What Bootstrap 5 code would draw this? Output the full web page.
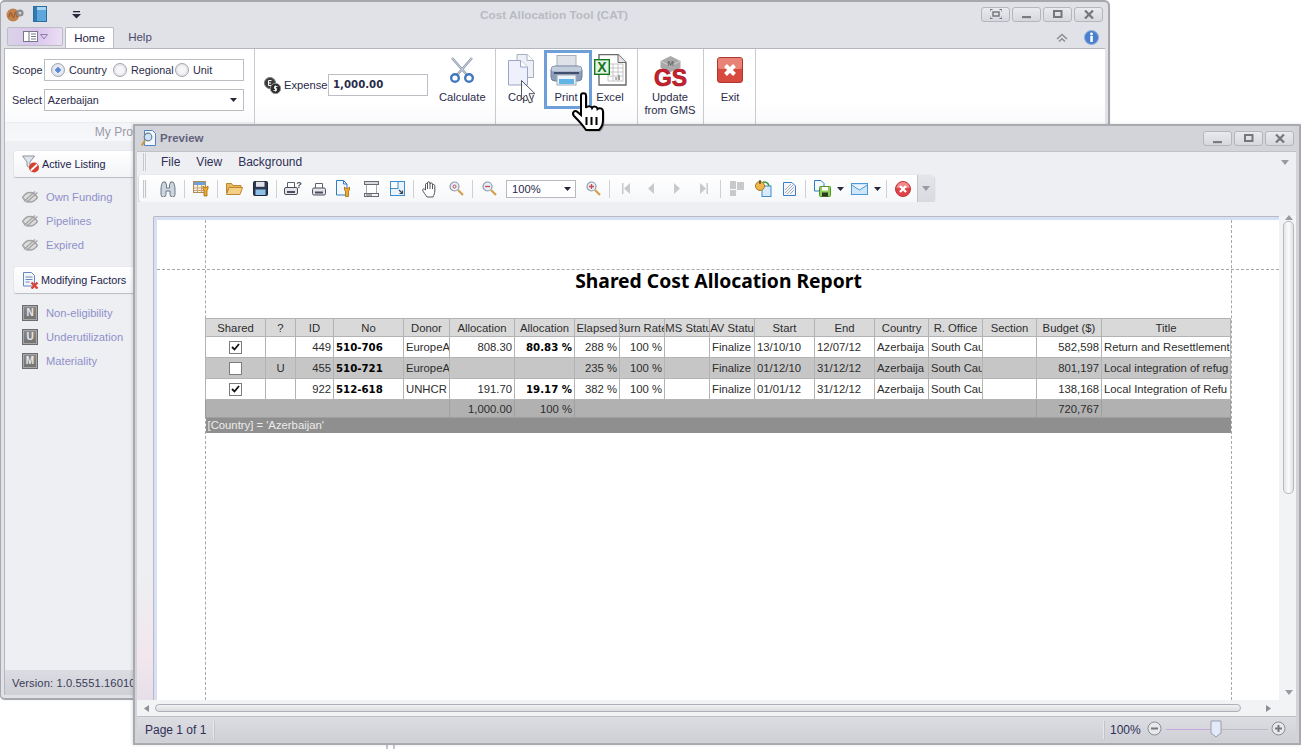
<!DOCTYPE html>
<html lang="en">
<head>
<meta charset="utf-8">
<title>Cost Allocation Tool</title>
<link href="https://cdn.jsdelivr.net/npm/bootstrap@5.3.0/dist/css/bootstrap.min.css" rel="stylesheet">
<style>
html,body{height:100%;margin:0;background:#fff;overflow:hidden;font-family:"Liberation Sans","DejaVu Sans",sans-serif;font-size:11.2px;color:#2b2b4a}
svg{display:block;flex:none}
.desk{position:relative;width:1301px;height:749px;overflow:hidden}
.win-main{position:absolute;left:0;top:0;width:1110px;height:700px;background:#e0e2e7;border:1px solid #a7a8ae;border-width:2px 2px 2px 1px;border-radius:5px 6px 5px 5px;display:flex;flex-direction:column;box-shadow:0 0 1px #bbb}
.win-prev{position:absolute;left:133px;top:124px;width:1168px;height:621px;background:#d3d4d9;border:2px solid #a9aab0;display:flex;flex-direction:column;box-shadow:-1px 0 3px rgba(0,0,0,.12)}
.tbar-main{height:24px;padding:0 5px}
.app-title{position:absolute;left:-2px;width:1110px;top:5px;text-align:center;font-weight:700;font-size:11.8px;color:#b9bac2;pointer-events:none}
.wbtn{width:29px;height:15px;padding:0;border:1px solid #b4b6bc;border-radius:3px;background:linear-gradient(#e9eaee,#d6d8dd);display:flex;align-items:center;justify-content:center;margin-left:2px}
.tabs-row{height:22px;padding-left:6px;border:0;position:relative}
.appbtn{width:56px;height:19px;border:1px solid #bcbcc6;border-radius:2px;background:linear-gradient(100deg,#dcd4e8,#d9c4ee 50%,#ece0f4);margin-top:1px;padding:0;display:flex;align-items:center;justify-content:center;gap:2px}
.tabs-row .nav-link{height:22px;padding:0 13px;font-size:11.5px;line-height:20px;color:#4b4b6e;border:0;border-radius:0;margin-left:2px}
.tabs-row .nav-link.active{width:49px;padding:0;text-align:center;background:#fff;color:#23234a;border:1px solid #b9bbc2;border-bottom:0;border-radius:2px 2px 0 0;margin-top:1px;height:21px}
.tabs-row .nav-link.plain{margin-left:0;width:52px;padding:0;text-align:center;margin-top:1px}
.tab-tools{position:absolute;right:9px;top:4px;gap:16px}
.ribbon{height:93px;margin:0 3px 0 3px;background:linear-gradient(#fff 0,#fff 55%,#f4f5f8);border-top:1px solid #b4b6bd;border-left:1px solid #b4b6bd;display:flex}
.rgroup{border-right:1px solid #c9cad0;position:relative;flex:none}
.rg-scope{width:250px;padding:10px 0 0 7px;font-size:10.8px}
.rg-exp{width:241px}
.rg-clip{width:142px}
.rg-gms{width:66px}
.rg-exit{width:52px}
.rg-cap{position:absolute;left:0;right:0;bottom:0;height:19px;text-align:center;color:#9a9aa8;font-size:12px;line-height:19px;padding-right:16px;background:linear-gradient(#f3f4f7,#f7f8fa);border-top:1px solid #eceDF0}
.rlabel{width:32px;color:#2b2b4a}
.fieldbox{height:22px;width:200px;border:1px solid #bcbec4;background:#fff;display:flex;align-items:center}
.radio-o{width:14px;height:14px;border-radius:50%;border:1px solid #a2a4ac;background:radial-gradient(#f6f6f8 35%,#d6d7dc);display:inline-block;flex:none;margin-right:4px}
.radio-o.on{background:radial-gradient(#4f7fd4 0,#6e96dc 30%,#e9edf6 34%,#d6dae4)}
.ricon{position:absolute}
.rbtn{position:absolute;top:0;height:80px;display:flex;flex-direction:column;align-items:center;padding:0;border:0;background:none;font-size:11.2px;line-height:13px;color:#2b2b4a;text-align:center}
.rbtn .rtxt{position:absolute;top:42px;left:0;right:0}
.sel-print{position:absolute;left:48px;top:1px;width:48px;height:59px;border:3px solid #6f9fd8}
.amt{width:100px;height:22px;border:1px solid #bcbec4;background:#fff;font-family:"DejaVu Sans",sans-serif;font-weight:700;padding-left:4px;line-height:20px;font-size:10.2px;color:#2b2b4a}
.body-main{flex:1;min-height:0;margin:0 3px 0 3px;background:#eeeff2;border-left:1px solid #b4b6bd;position:relative;padding:10px 0 0 9px}
.sbtn{width:125px;height:26px;background:linear-gradient(#fff,#f3f4f7);border:0;border-radius:2px 0 0 2px;box-shadow:0 1px 1px #bcbdc4,-0 0 1px #c2c3c9;padding:0 0 0 8px;color:#22224a;font-size:10.8px;gap:2px}
.nav-items{padding:8px 0 10px 8px;margin:0;background:none;border:0}
.nav-items .list-group-item{background:none;border:0;padding:0;height:24px;display:flex;align-items:center;gap:8px;color:#8f8fca;font-size:11.2px}
.lettr{width:16px;height:16px;border:1px solid #6c6c6c;background:linear-gradient(#8a8a8a,#727272);color:#e8e8e8;font-weight:700;font-size:10px;line-height:14px;text-align:center;box-shadow:inset 0 0 0 1px #a8a8a8}
.st-main{height:25px;margin:0 3px 3px 3px;background:linear-gradient(#dcdde2,#cfd0d6);border-left:1px solid #b4b6bd;padding-left:7px;line-height:26px;color:#3a3a5a;letter-spacing:.1px;overflow:hidden}
.ptitle{height:25px;padding:0 5px 0 6px;flex:none}
.ptitle b{color:#62627c;font-size:11.5px;margin-left:3px}
.pwrap{flex:1;min-height:0;background:#eeeff2;display:flex;flex-direction:column;position:relative;border-top:1px solid #c1c2c8;margin:0 3px 1px 2px}
.pmenu{height:20px;margin-bottom:3px;padding:0 0 0 6px;min-height:0;flex:none;flex-wrap:nowrap;justify-content:flex-start;position:relative}
.pmenu .grip{margin-right:14px}
.pmenu .nav-link{padding:0 9px 0 0;font-size:12px;color:#2f2f58;margin-right:7px}
.grip{width:4px;height:18px;background:repeating-linear-gradient(90deg,#c6c7cc 0 1px,#f4f4f6 1px 2px);margin-right:8px;flex:none}
.ptool{height:27px;margin-left:2px;width:795px;flex:none;background:linear-gradient(#fff,#f6f7f9);border-radius:3px;box-shadow:0 1px 2px #a2a3ab;padding-left:4px;position:relative;display:flex;align-items:center}
.tb{width:26px;height:24px;display:flex;align-items:center;justify-content:center;flex:none}
.tb.w25{width:25px}.tb.w28{width:27px}.tb.w29{width:28px}
.tarrow{width:11px;flex:none}
.tsep{width:7px;height:18px;flex:none;position:relative}
.tsep:after{content:"";position:absolute;left:3px;top:0;width:1px;height:18px;background:#cfd0d6}
.zoomsel{width:70px;height:18px;border:1px solid #b8b9c0;background:#fff;margin:0 4px;padding-left:5px;line-height:16px;color:#2b2b4a;position:relative;flex:none}
.zoomsel svg{position:absolute;right:4px;top:6px}
.toverflow{position:absolute;right:0;top:0;bottom:0;width:17px;background:linear-gradient(#e4e5ea,#d9dae0);border-left:1px solid #c4c5cb;border-radius:0 3px 3px 0;display:flex;align-items:center;justify-content:center}
.pview{flex:1;min-height:0;display:flex;position:relative;padding:14px 0 0 16px;background:linear-gradient(180deg,#eeeff2 75%,#f1e6ec 92%,#e6dfe9)}
.pframe{flex:1;min-width:0;border-top:1px solid #b8bac0;border-left:1px solid #b8bac0;border-radius:2px 0 0 0;background:#d7e0f6;padding:3px 0 0 3px;display:flex}
.ppage{flex:1;background:#fff;position:relative;min-width:0}
.dash-h{position:absolute;left:0;right:0;top:49px;border-top:1px dashed #a8a8a8}
.pinner{position:absolute;left:48px;top:0;bottom:0;width:1027px;border-left:1px dashed #a8a8a8;border-right:1px dashed #a8a8a8}
.rtitle{padding-top:49px;height:98px;text-align:center;font-family:"Noto Sans",sans-serif;font-weight:700;font-size:19.3px;line-height:24px;color:#000}
.rep{table-layout:fixed;width:1026px;margin:0 0 0 -1px;border-collapse:collapse;font-size:11.3px;color:#2d2d2d}
.rep th,.rep td{border:1px solid #b3b3b3;padding:0 2px;white-space:nowrap;overflow:hidden;font-weight:400;background:#fff;color:#2d2d2d;height:21px;line-height:19px;box-shadow:none;vertical-align:middle}
.rep thead th{height:18px;line-height:16px;background:#d9d9d9;text-align:center;padding:0}
.rep .alt td{background:#c6c6c6}
.rep .tot td{background:#b1b1b1;height:18px;line-height:16px;border-color:#a0a0a0;border-left-color:#999}
.rep .foot td{background:#8f8f8f;color:#ececec;height:15px;line-height:14px;border:0}
.clipc{display:flex;justify-content:center;overflow:hidden;white-space:nowrap}
.cb{width:13px;height:13px;margin:0 auto;border:1px solid #7c7c7c;background:#fff;display:flex;align-items:center;justify-content:center}
.rep td.no{font-family:"DejaVu Sans",sans-serif;font-weight:700;color:#000;font-size:10.2px}
.vsb{width:17px;flex:none;background:#f2f3f5;position:relative}
.vth{position:absolute;left:4px;top:5px;width:11px;height:273px;border:1px solid #b9bac0;border-radius:5px;background:linear-gradient(90deg,#e5e6ea,#fbfbfc 50%,#e1e2e6);}
.hsb{height:16px;flex:none;background:#f2f3f5;position:relative}
.hth{position:absolute;left:18px;right:55px;top:4px;height:8px;border:1px solid #aeb0b7;border-radius:4px;background:linear-gradient(#f2f2f4,#dcdde1)}
.arr{position:absolute}
.pstat{height:26px;flex:none;background:linear-gradient(#dcdde2,#cfd0d6);position:relative;padding-left:8px;color:#2f2f58;font-size:12px;border-top:1px solid #bfc0c6}
.ssep{width:2px;height:18px;background:#e8e8ec;border-right:1px solid #c4c5cb}
.zoomtrack{position:absolute;left:1029px;top:12px;width:102px;height:1px;background:linear-gradient(90deg,#c8a9dc 0,#c8a9dc 48%,#bcbdc4 50%)}
.hand{position:absolute;left:570px;top:91px;z-index:5}
.arrowc{position:absolute;left:520px;top:79px;z-index:5}
.dots{position:absolute;left:386px;top:745px;width:9px;height:4px;border-left:2px solid #c8c8cc;border-right:2px solid #c8c8cc}
</style>
</head>
<body>
<div class="desk">

<!-- main window -->
<div class="win-main">
  <div class="app-title">Cost Allocation Tool (CAT)</div>
  <div class="tbar-main d-flex align-items-center">
    <svg width="18" height="16" viewBox="0 0 18 16"><circle cx="7" cy="9" r="6.5" fill="#c2824e"/><path d="M3 11c1-5 2-6 3-2s2 3 3-1 2-2 2 3" fill="none" stroke="#8c4f28" stroke-width="1"/><circle cx="14" cy="7" r="3.6" fill="#8d8d90"/><circle cx="14" cy="7" r="1.3" fill="#d9dade"/></svg>
    <svg style="margin-left:9px" width="14" height="16" viewBox="0 0 14 16"><rect x=".5" y=".5" width="13" height="15" fill="#5ea7dc" stroke="#2c6d9e"/><rect x="1" y="1" width="3" height="14" fill="#2f7bb2"/><rect x="4" y="1" width="9" height="3" fill="#a8d4f0"/></svg>
    <svg style="margin-left:25px" width="9" height="9" viewBox="0 0 9 9"><rect x="1" y="1" width="7" height="1.3" fill="#26263c"/><path d="M0 4h9L4.500 8.500z" fill="#26263c"/></svg>
    <div class="ms-auto d-flex">
      <button class="btn wbtn" aria-label="Fullscreen"><svg width="12" height="10" viewBox="0 0 12 10" fill="none" stroke="#6e7078"><path d="M0 2.500V.5h2.500M9.500.5H12v2M0 7.500v2h2.500M9.500 9.500H12v-2"/><rect x="3" y="3" width="6" height="4" stroke-width="1.400"/></svg></button>
      <button class="btn wbtn" aria-label="Minimize"><svg width="10" height="10" viewBox="0 0 10 10"><rect x="0" y="7" width="9" height="2.200" fill="#7a7c84"/></svg></button>
      <button class="btn wbtn" aria-label="Maximize"><svg width="10" height="9" viewBox="0 0 10 9" fill="none" stroke="#74767e" stroke-width="2"><rect x="1" y="1" width="7.500" height="6"/></svg></button>
      <button class="btn wbtn" aria-label="Close"><svg width="10" height="9" viewBox="0 0 10 9" stroke="#74767e" stroke-width="2.200"><path d="M1 .5l8 8M9 .5l-8 8"/></svg></button>
    </div>
  </div>
  <ul class="nav tabs-row">
    <li class="nav-item"><button class="btn appbtn" aria-label="Menu"><svg width="15" height="11" viewBox="0 0 15 11"><rect x=".5" y=".5" width="14" height="10" fill="#fff" stroke="#77778a"/><path d="M6 .5v10M8 3h5M8 5.500h5M8 8h5" stroke="#77778a" fill="none"/></svg><svg width="8" height="6" viewBox="0 0 8 6"><path d="M.5.500h7L4 5z" fill="none" stroke="#8d7fa8"/></svg></button></li>
    <li class="nav-item"><a class="nav-link active" href="#">Home</a></li>
    <li class="nav-item"><a class="nav-link plain" href="#">Help</a></li>
    <li class="tab-tools d-flex align-items-center">
      <svg width="12" height="10" viewBox="0 0 12 10" fill="none" stroke="#8b8c92" stroke-width="1.500"><path d="M1 6l5-4.500L11 6M3 8.500l3-2.700 3 2.700"/></svg>
      <svg width="15" height="15" viewBox="0 0 15 15"><circle cx="7.500" cy="7.500" r="7" fill="#4a7fcb" stroke="#8fb0de"/><circle cx="7.500" cy="4" r="1.400" fill="#fff"/><rect x="6.300" y="6" width="2.500" height="6" fill="#fff"/></svg>
    </li>
  </ul>
  <div class="ribbon">
    <div class="rgroup rg-scope">
      <div class="d-flex align-items-center"><span class="rlabel">Scope</span>
        <div class="fieldbox" style="padding-left:6px"><span class="radio-o on"></span><span style="width:44px">Country</span><span class="radio-o"></span><span style="width:44px">Regional</span><span class="radio-o"></span><span>Unit</span></div></div>
      <div class="d-flex align-items-center" style="margin-top:8px"><span class="rlabel">Select</span>
        <div class="fieldbox ps-1 position-relative">Azerbaijan<svg class="ms-auto me-2" width="7" height="4" viewBox="0 0 7 4"><path d="M0 0h7L3.500 4z" fill="#26263c"/></svg></div></div>
      <div class="rg-cap">My Profile</div>
    </div>
    <div class="rgroup rg-exp">
      <div class="d-flex align-items-center ricon" style="left:9px;top:25px">
        <svg width="17" height="17" viewBox="0 0 17 17"><circle cx="6" cy="6" r="5.500" fill="#3c3c3e" stroke="#777"/><path d="M7.500 3.500H4.500v5h3M4.500 6h2.500" stroke="#fff" fill="none"/><circle cx="11.500" cy="11.500" r="5.200" fill="#2e2e30" stroke="#999"/><path d="M13.500 9.500h-3v2h2v2h-3M11.500 8.500v6" stroke="#fff" fill="none" stroke-width=".9"/></svg>
        <span style="margin-left:3px;width:44px">Expense</span>
        <div class="amt">1,000.00</div>
      </div>
      <button class="rbtn" style="left:184px;width:46px"><svg style="margin-top:8px" width="26" height="26" viewBox="0 0 26 26" fill="none"><path d="M3 1l15 17M23 1L8 18" stroke="#8d99ab" stroke-width="2.400"/><path d="M3 1l15 17M23 1L8 18" stroke="#dfe5ee" stroke-width=".8"/><circle cx="6" cy="21" r="3.800" stroke="#3f78bd" stroke-width="2.400"/><circle cx="20" cy="21" r="3.800" stroke="#3f78bd" stroke-width="2.400"/></svg><span class="rtxt">Calculate</span></button>
    </div>
    <div class="rgroup rg-clip">
      <div class="sel-print"></div>
      <button class="rbtn" style="left:0;width:50px"><svg style="margin-top:5px" width="26" height="32" viewBox="0 0 26 32"><path d="M9 .5h10l6.500 6v17H9z" fill="#eef0f6" stroke="#a6aec4"/><path d="M19 .5v6h6.500" fill="#fff" stroke="#a6aec4"/><path d="M.5 6.500h12l7 6.500v18H.5z" fill="#eef1fb" stroke="#9aa5c8"/><path d="M12.500 6.500v6.500h7" fill="#fff" stroke="#9aa5c8"/></svg><span class="rtxt">Copy</span></button>
      <button class="rbtn" style="left:45px;width:50px"><svg style="margin-top:6px" width="33" height="31" viewBox="0 0 33 31"><rect x="7" y=".5" width="19" height="13" fill="#dfe2e8" stroke="#a9aeb9"/><rect x="1" y="11" width="31" height="15" rx="4" fill="#8c9db8" stroke="#6f7f9b"/><rect x="1.500" y="11.500" width="30" height="5" rx="2.500" fill="#c3cedd"/><rect x="4" y="17" width="25" height="2" fill="#3f4e6c"/><rect x="7" y="20" width="19" height="10" fill="#eef3fa" stroke="#9ea9b8"/><rect x="9" y="24" width="15" height="5" fill="#62b4e4"/></svg><span class="rtxt">Print</span></button>
      <button class="rbtn" style="left:89px;width:50px"><svg style="margin-top:5px" width="33" height="32" viewBox="0 0 33 32"><path d="M5 .5h19l8 8v22.500H5z" fill="#fff" stroke="#6a6a6a" stroke-width="1.400"/><path d="M24 .5v8h8" fill="#e5e5e5" stroke="#6a6a6a"/><path d="M14 10h15v17H14zM14 14h15M14 18h15M14 22h15M19 10v17M24 10v17" fill="none" stroke="#c5c5c5"/><rect x="24" y="21" width="2" height="5" fill="#a0a0a0"/><rect x="21" y="23" width="2" height="3" fill="#b5b5b5"/><rect x=".7" y="5.700" width="14.600" height="14.600" fill="#e5f3e4" stroke="#137a1c" stroke-width="1.400"/><text x="8" y="17.500" text-anchor="middle" font-family="Liberation Sans" font-weight="700" font-size="14" fill="#13741d">X</text></svg><span class="rtxt">Excel</span></button>
    </div>
    <div class="rgroup rg-gms">
      <button class="rbtn" style="left:2px;width:60px"><svg style="margin-top:7px" width="33" height="32" viewBox="0 0 33 32"><path d="M16.500 0l10 5v7l-10 4-10-4V5z" fill="#a9a9a9"/><path d="M6.500 5l10 5 10-5" fill="none" stroke="#cfcfcf"/><text x="16.500" y="10" text-anchor="middle" font-family="Liberation Sans" font-weight="700" font-size="8" fill="#6d6d6d">M</text><text x="16.500" y="30" text-anchor="middle" textLength="33" lengthAdjust="spacingAndGlyphs" font-family="Liberation Sans" font-weight="700" font-size="23" fill="#c8202e" stroke="#a01622" stroke-width=".7">GS</text></svg><span class="rtxt">Update<br>from GMS</span></button>
    </div>
    <div class="rgroup rg-exit">
      <button class="rbtn" style="left:1px;width:50px"><svg style="margin-top:8px" width="26" height="26" viewBox="0 0 26 26"><rect x=".5" y=".5" width="25" height="25" rx="2.500" fill="#d74a40" stroke="#b0362e"/><rect x="1" y="1" width="24" height="11" rx="2" fill="#e98377"/><path d="M8.500 8.500l9 9M17.500 8.500l-9 9" stroke="#fff" stroke-width="4"/></svg><span class="rtxt">Exit</span></button>
    </div>
  </div>
  <div class="body-main">
    <button class="btn sbtn d-flex align-items-center"><svg width="18" height="18" viewBox="0 0 18 18"><path d="M.5 1h12l-4.500 6v6l-3-2V7z" fill="#dfe4ea" stroke="#8b95a3"/><circle cx="12" cy="12.500" r="5" fill="#d7402e"/><path d="M8.800 15.500l6.400-6" stroke="#fff" stroke-width="1.800"/></svg><span>Active Listing</span></button>
    <ul class="list-group nav-items">
      <li class="list-group-item"><svg width="16" height="12" viewBox="0 0 16 12" fill="#dcdcdc" stroke="#a3a3a3" stroke-width="1.300"><path d="M.5 6.500C3 2.500 5.500 1.500 8 1.500s5 1 7.500 5C13 10 10.500 11 8 11s-5-1-7.500-4.500z"/><path d="M2 10.500l11-10M4.500 11.500l11-10" stroke-width="1.200"/></svg>Own Funding</li>
      <li class="list-group-item"><svg width="16" height="12" viewBox="0 0 16 12" fill="#dcdcdc" stroke="#a3a3a3" stroke-width="1.300"><path d="M.5 6.500C3 2.500 5.500 1.500 8 1.500s5 1 7.500 5C13 10 10.500 11 8 11s-5-1-7.500-4.500z"/><path d="M2 10.500l11-10M4.500 11.500l11-10" stroke-width="1.200"/></svg>Pipelines</li>
      <li class="list-group-item"><svg width="16" height="12" viewBox="0 0 16 12" fill="#dcdcdc" stroke="#a3a3a3" stroke-width="1.300"><path d="M.5 6.500C3 2.500 5.500 1.500 8 1.500s5 1 7.500 5C13 10 10.500 11 8 11s-5-1-7.500-4.500z"/><path d="M2 10.500l11-10M4.500 11.500l11-10" stroke-width="1.200"/></svg>Expired</li>
    </ul>
    <button class="btn sbtn d-flex align-items-center"><svg style="margin-left:1px" width="16" height="17" viewBox="0 0 16 17"><path d="M.5.500h8l3 3V14H.5z" fill="#f2f5fb" stroke="#6b87b8"/><path d="M2.500 5h7M2.500 7.500h7M2.500 10h4" stroke="#6b87b8"/><path d="M8.500 10.500l6 6M14.500 10.500l-6 6" stroke="#d8433a" stroke-width="2.400"/></svg><span>Modifying Factors</span></button>
    <ul class="list-group nav-items">
      <li class="list-group-item"><span class="lettr">N</span>Non-eligibility</li>
      <li class="list-group-item"><span class="lettr">U</span>Underutilization</li>
      <li class="list-group-item"><span class="lettr">M</span>Materiality</li>
    </ul>
  </div>
  <div class="st-main">Version: 1.0.5551.16010</div>
</div>

<!-- pointers over the ribbon -->
<svg class="arrowc" width="16" height="26" viewBox="0 0 16 26"><path d="M1.500 1.500v19l4.500-4.500 3.500 8 3-1.300-3.500-8h6z" fill="#fff" fill-opacity=".7" stroke="#55555f"/></svg>
<svg class="hand" width="38" height="42" viewBox="0 0 38 42"><path d="M11 4.500c0-3 5-3 5 0V17c1-2.500 5-2.500 6 0 1-2 5-2 5.500 1 1.500-1.500 5.500-1 5.500 2.500V29c0 5-2 8-4 10H16c-2-3-6-8-12-14-2.500-3 .5-6.500 3.500-4l3.500 3z" fill="#000" opacity=".3" transform="translate(1.500 1.500)"/><path d="M11 4.500c0-3 5-3 5 0V17c1-2.500 5-2.500 6 0 1-2 5-2 5.500 1 1.500-1.500 5.500-1 5.500 2.500V29c0 5-2 8-4 10H16c-2-3-6-8-12-14-2.500-3 .5-6.500 3.500-4l3.500 3z" fill="#fff" stroke="#000" stroke-width="2"/><path d="M16.500 26v8M21.500 26v8M26.500 26v8" stroke="#000" stroke-width="2"/></svg>

<!-- preview window -->
<div class="win-prev" style="z-index:2">
  <div class="ptitle d-flex align-items-center">
    <svg width="16" height="17" viewBox="0 0 16 17"><path d="M3.500.5h8l3 3v12h-11z" fill="#f3f7fd" stroke="#4f83c4"/><circle cx="7" cy="7" r="3.800" fill="#cfe5f7" stroke="#6d7f94" stroke-width="1.200"/><path d="M4 10.500L.8 15.500" stroke="#c99a45" stroke-width="2.200"/></svg>
    <b>Preview</b>
    <div class="ms-auto d-flex">
      <button class="btn wbtn" aria-label="Minimize"><svg width="10" height="10" viewBox="0 0 10 10"><rect x="0" y="7" width="9" height="2.200" fill="#7a7c84"/></svg></button>
      <button class="btn wbtn" aria-label="Maximize"><svg width="10" height="9" viewBox="0 0 10 9" fill="none" stroke="#74767e" stroke-width="2"><rect x="1" y="1" width="7.500" height="6"/></svg></button>
      <button class="btn wbtn" aria-label="Close"><svg width="10" height="9" viewBox="0 0 10 9" stroke="#74767e" stroke-width="2.200"><path d="M1 .5l8 8M9 .5l-8 8"/></svg></button>
    </div>
  </div>
  <div class="pwrap">
    <nav class="navbar pmenu align-items-center">
      <span class="grip"></span>
      <a class="nav-link" href="#">File</a><a class="nav-link" href="#">View</a><a class="nav-link" href="#">Background</a>
      <svg class="ms-auto" style="margin-right:7px" width="8" height="5" viewBox="0 0 8 5"><path d="M0 0h8L4 5z" fill="#9a9ba2"/></svg>
    </nav>
    <div class="ptool">
      <span class="grip"></span>
      <span class="tb" title="Find"><svg width="16" height="16" viewBox="0 0 16 16"><path d="M1 8c0-3 1-6 2-7h2.500l1 3v3H9.500V4l1-3H13c1 1 2 4 2 7v5.500A2.500 2.500 0 0110 13.500V10H6v3.500a2.500 2.500 0 01-5 0z" fill="#cbd6e3" stroke="#71777f"/></svg></span>
      <span class="tsep"></span>
      <span class="tb"><svg width="17" height="16" viewBox="0 0 17 16"><rect x=".5" y=".5" width="12" height="11" fill="#f8efdd" stroke="#b08a5a"/><rect x="1" y="1" width="11" height="3" fill="#6aa1d9"/><path d="M1 7h11M1 9.500h11M4.500 4v7M8.500 4v7" stroke="#c6a57a"/><path d="M10 5a3 3 0 005 0v3l-1 1v6h-3V9l-1-1z" fill="#f0a92a" stroke="#a36b10" stroke-width=".8"/></svg></span>
      <span class="tsep"></span>
      <span class="tb"><svg width="17" height="13" viewBox="0 0 17 13"><path d="M.5 11V1.500h5l1.500 2h8v2H3z" fill="#e9b95f" stroke="#b98631"/><path d="M.5 12.500l2.500-7h13.500l-2.500 7z" fill="#f5cf86" stroke="#b98631"/></svg></span>
      <span class="tb"><svg width="15" height="15" viewBox="0 0 15 15"><rect x=".5" y=".5" width="14" height="14" rx="1" fill="#2e3a52" stroke="#1d2638"/><rect x="3" y=".8" width="8.500" height="5" fill="#dfe3ea"/><rect x="2.500" y="8.500" width="10" height="5.500" fill="#8fc1e8"/></svg></span>
      <span class="tsep"></span>
      <span class="tb"><svg width="18" height="16" viewBox="0 0 18 16"><path d="M3.500 6.500V1.500h7v5" fill="#fff" stroke="#5a6170"/><rect x=".5" y="6.500" width="13" height="7" rx="1.500" fill="#e2e4e9" stroke="#4a4f5a"/><rect x="3" y="10" width="8" height="2" fill="#4a4f5a"/><text x="15" y="7" text-anchor="middle" font-family="Liberation Sans" font-weight="700" font-size="9" fill="#4a4f5a">?</text></svg></span>
      <span class="tb w25"><svg width="14" height="14" viewBox="0 0 14 14"><path d="M3.500 6V1.500h7V6" fill="#fff" stroke="#5a6170"/><rect x=".5" y="6" width="13" height="7" rx="1.500" fill="#e2e4e9" stroke="#4a4f5a"/><rect x="3" y="9.500" width="8" height="2" fill="#4a4f5a"/></svg></span>
      <span class="tb w28"><svg width="17" height="17" viewBox="0 0 17 17"><path d="M.5.500h7l3.500 3.500v11H.5z" fill="#f4f8fd" stroke="#2f7cc4"/><path d="M7.500.5V4H11" fill="none" stroke="#2f7cc4"/><path d="M8.500 7a3 3 0 005 0v3l-1 1v5.500h-3V11l-1-1z" fill="#f0a92a" stroke="#a36b10" stroke-width=".8"/></svg></span>
      <span class="tb"><svg width="15" height="16" viewBox="0 0 15 16" fill="none" stroke="#666a74"><rect x="2.500" y="3.500" width="10" height="9" fill="#fff" stroke="#aaa"/><rect x=".5" y=".5" width="14" height="3" fill="#d8d9de"/><rect x=".5" y="12.500" width="14" height="3" fill="#f4f4f6"/><path d="M2 14h6" stroke-width="1.100"/></svg></span>
      <span class="tb"><svg width="15" height="15" viewBox="0 0 15 15"><rect x=".5" y=".5" width="14" height="14" fill="#eaf3fb" stroke="#3b8ed0"/><rect x=".5" y=".5" width="7.500" height="7" fill="#fff" stroke="#3b8ed0"/><path d="M9 9l3.500 3.500M9.500 12.500h3v-3" fill="none" stroke="#3a4658" stroke-width="1.200"/></svg></span>
      <span class="tsep"></span>
      <span class="tb"><svg width="17" height="18" viewBox="0 0 17 18"><path d="M5 17c-1-2-4-5-4.300-7-.2-1.500 1.500-1.500 2.800 0V4.500c0-1.500 2-1.500 2 0V3c0-1.800 2.500-1.800 2.500 0v1c0-1.500 2.500-1.500 2.500 0v1.500c0-1.400 2.300-1.400 2.300.5v5c0 2-1 4-1.800 6z" fill="#fff" stroke="#55565c"/><path d="M5.500 4v5M8 3.500V9M10.500 5v4" stroke="#55565c" fill="none"/></svg></span>
      <span class="tb"><svg width="15" height="15" viewBox="0 0 15 15"><circle cx="5.500" cy="5.500" r="4.500" fill="#e5eff9" stroke="#8e9bad" stroke-width="1.200"/><circle cx="5.500" cy="5.500" r="1.500" fill="none" stroke="#d04a4a"/><path d="M9 9l5 5" stroke="#d3a04e" stroke-width="2.200"/></svg></span>
      <span class="tsep"></span>
      <span class="tb"><svg width="15" height="15" viewBox="0 0 15 15"><circle cx="5.500" cy="5.500" r="4.500" fill="#e5eff9" stroke="#8e9bad" stroke-width="1.200"/><path d="M3 5.500h5" stroke="#d04a4a" stroke-width="1.300"/><path d="M9 9l5 5" stroke="#d3a04e" stroke-width="2.200"/></svg></span>
      <div class="zoomsel">100%<svg width="7" height="4" viewBox="0 0 7 4"><path d="M0 0h7L3.500 4z" fill="#26263c"/></svg></div>
      <span class="tb"><svg width="15" height="15" viewBox="0 0 15 15"><circle cx="5.500" cy="5.500" r="4.500" fill="#e5eff9" stroke="#8e9bad" stroke-width="1.200"/><path d="M3 5.500h5M5.500 3v5" stroke="#d04a4a" stroke-width="1.300"/><path d="M9 9l5 5" stroke="#d3a04e" stroke-width="2.200"/></svg></span>
      <span class="tsep"></span>
      <span class="tb w25"><svg width="8" height="11" viewBox="0 0 8 11" fill="#c8c9cd"><rect width="1.500" height="11"/><path d="M8 0v11L2 5.500z"/></svg></span>
      <span class="tb w25"><svg width="6" height="11" viewBox="0 0 6 11" fill="#c8c9cd"><path d="M6 0v11L0 5.500z"/></svg></span>
      <span class="tb w29"><svg width="6" height="11" viewBox="0 0 6 11" fill="#c8c9cd"><path d="M0 0v11l6-5.500z"/></svg></span>
      <span class="tb"><svg width="8" height="11" viewBox="0 0 8 11" fill="#c8c9cd"><rect x="6.500" width="1.500" height="11"/><path d="M0 0v11l6-5.500z"/></svg></span>
      <span class="tsep"></span>
      <span class="tb"><svg width="14" height="15" viewBox="0 0 14 15" fill="#c8c9cd"><rect x="0" y="0" width="6" height="8"/><rect x="7" y="1" width="7" height="8"/><rect x="0" y="9" width="6" height="6"/></svg></span>
      <span class="tb"><svg width="17" height="17" viewBox="0 0 17 17"><rect x="7" y="6" width="9" height="10.500" fill="#d9ebfa" stroke="#3b8ed0"/><circle cx="5" cy="6" r="4.500" fill="#eeb64b" stroke="#a67a20"/><path d="M5 0v4" stroke="#333" stroke-width="1.200"/><path d="M8 2c4 0 5 1 6 4" fill="none" stroke="#3f9a3f" stroke-width="1.600"/></svg></span>
      <span class="tb"><svg width="13" height="14" viewBox="0 0 13 14"><path d="M.5.500h8.500l3.500 3.500v9.500H.5z" fill="#f2f6fb" stroke="#3b7fc6"/><path d="M2 11l8-8M2 8l6-6M4 12l7-7M7 12l4-4" stroke="#a9abb0" fill="none"/></svg></span>
      <span class="tsep"></span>
      <span class="tb"><svg width="17" height="17" viewBox="0 0 17 17"><path d="M.5.500h6.500l3 3v7.500h-9.500z" fill="#f5f9fd" stroke="#2f7cc4"/><rect x="5.500" y="6.500" width="11" height="10" rx="1" fill="#8fd05c" stroke="#4f952a"/><rect x="8" y="7" width="6" height="3.500" fill="#fff"/><rect x="8" y="12.500" width="6" height="4" fill="#2d3a22"/></svg></span>
      <span class="tarrow d-flex justify-content-center"><svg width="7" height="4" viewBox="0 0 7 4"><path d="M0 0h7L3.500 4z" fill="#26263c"/></svg></span>
      <span class="tb"><svg width="17" height="12" viewBox="0 0 17 12"><rect x=".5" y=".5" width="16" height="11" fill="#cfe6f8" stroke="#4b9ad8"/><path d="M.5 2L8.500 7l8-5" fill="#eaf4fc" stroke="#4b9ad8"/></svg></span>
      <span class="tarrow d-flex justify-content-center"><svg width="7" height="4" viewBox="0 0 7 4"><path d="M0 0h7L3.500 4z" fill="#26263c"/></svg></span>
      <span class="tsep"></span>
      <span class="tb"><svg width="16" height="16" viewBox="0 0 16 16"><circle cx="8" cy="8" r="7.500" fill="#e0434a" stroke="#c23238"/><path d="M1.500 7a6.500 6 0 0113 0z" fill="#ef8a8d"/><path d="M5 5l6 6M11 5l-6 6" stroke="#fff" stroke-width="2.400"/></svg></span>
      <div class="toverflow"><svg width="8" height="5" viewBox="0 0 8 5"><path d="M0 0h8L4 5z" fill="#9a9ba2"/></svg></div>
    </div>
    <div class="pview">
      <div class="pframe">
        <div class="ppage">
          <div class="dash-h"></div>
          <div class="pinner">
            <div class="rtitle">Shared Cost Allocation Report</div>
            <table class="table rep">
              <colgroup><col style="width:60px"><col style="width:30px"><col style="width:38px"><col style="width:70px"><col style="width:46px"><col style="width:65px"><col style="width:60px"><col style="width:45px"><col style="width:45px"><col style="width:45px"><col style="width:45px"><col style="width:60px"><col style="width:60px"><col style="width:54px"><col style="width:54px"><col style="width:54px"><col style="width:65px"><col style="width:129px"></colgroup>
              <thead><tr>
                <th><div class="clipc">Shared</div></th><th><div class="clipc">?</div></th><th><div class="clipc">ID</div></th><th><div class="clipc">No</div></th><th><div class="clipc">Donor</div></th><th><div class="clipc">Allocation</div></th><th><div class="clipc">Allocation</div></th><th><div class="clipc">Elapsed</div></th><th><div class="clipc">Burn Rate</div></th><th><div class="clipc">GMS Status</div></th><th><div class="clipc">JAV Status</div></th><th><div class="clipc">Start</div></th><th><div class="clipc">End</div></th><th><div class="clipc">Country</div></th><th><div class="clipc">R. Office</div></th><th><div class="clipc">Section</div></th><th><div class="clipc">Budget ($)</div></th><th><div class="clipc">Title</div></th>
              </tr></thead>
              <tbody>
                <tr><td><div class="cb"><svg width="9" height="8" viewBox="0 0 9 8"><path d="M1 4l2.500 2.500L8 1" fill="none" stroke="#111" stroke-width="1.800"/></svg></div></td><td></td><td class="text-end">449</td><td class="no">510-706</td><td>EuropeA</td><td class="text-end">808.30</td><td class="text-end no">80.83 %</td><td class="text-end">288 %</td><td class="text-end">100 %</td><td></td><td>Finalize</td><td>13/10/10</td><td>12/07/12</td><td>Azerbaija</td><td>South Cau</td><td></td><td class="text-end">582,598</td><td>Return and Resettlement</td></tr>
                <tr class="alt"><td><div class="cb"></div></td><td class="text-center">U</td><td class="text-end">455</td><td class="no">510-721</td><td>EuropeA</td><td></td><td></td><td class="text-end">235 %</td><td class="text-end">100 %</td><td></td><td>Finalize</td><td>01/12/10</td><td>31/12/12</td><td>Azerbaija</td><td>South Cau</td><td></td><td class="text-end">801,197</td><td>Local integration of refug</td></tr>
                <tr><td><div class="cb"><svg width="9" height="8" viewBox="0 0 9 8"><path d="M1 4l2.500 2.500L8 1" fill="none" stroke="#111" stroke-width="1.800"/></svg></div></td><td></td><td class="text-end">922</td><td class="no">512-618</td><td>UNHCR</td><td class="text-end">191.70</td><td class="text-end no">19.17 %</td><td class="text-end">382 %</td><td class="text-end">100 %</td><td></td><td>Finalize</td><td>01/01/12</td><td>31/12/12</td><td>Azerbaija</td><td>South Cau</td><td></td><td class="text-end">138,168</td><td>Local Integration of Refu</td></tr>
                <tr class="tot"><td colspan="5"></td><td class="text-end">1,000.00</td><td class="text-end">100 %</td><td colspan="9"></td><td class="text-end">720,767</td><td></td></tr>
                <tr class="foot"><td colspan="18">[Country] = 'Azerbaijan'</td></tr>
              </tbody>
            </table>
          </div>
        </div>
      </div>
      <div class="vsb">
        <svg class="arr" style="left:6px;top:-1px" width="8" height="5" viewBox="0 0 8 5"><path d="M0 5h8L4 0z" fill="#9a9ba2"/></svg>
        <div class="vth"></div>
        <svg class="arr" style="left:6px;bottom:5px" width="8" height="5" viewBox="0 0 8 5"><path d="M0 0h8L4 5z" fill="#9a9ba2"/></svg>
      </div>
    </div>
    <div class="hsb">
      <svg class="arr" style="left:7px;top:5px" width="5" height="7" viewBox="0 0 5 7"><path d="M5 0v7L0 3.500z" fill="#8e8f96"/></svg>
      <div class="hth"></div>
      <svg class="arr" style="right:25px;top:5px" width="5" height="7" viewBox="0 0 5 7"><path d="M0 0v7l5-3.500z" fill="#8e8f96"/></svg>
    </div>
    <div class="pstat d-flex align-items-center">
      <span style="width:68px">Page 1 of 1</span><span class="ssep"></span>
      <div class="ms-auto d-flex align-items-center" style="width:193px"><span class="ssep"></span><span style="margin-left:5px">100%</span></div>
      <svg class="arr" style="left:1010px;top:4px" width="15" height="15" viewBox="0 0 15 15"><circle cx="7.500" cy="7.500" r="6.500" fill="#e7e8ec" stroke="#8c8d94"/><path d="M4 7.500h7" stroke="#75767e" stroke-width="2"/></svg>
      <span class="zoomtrack"></span>
      <svg class="arr" style="left:1073px;top:3px" width="12" height="18" viewBox="0 0 12 18"><path d="M1 1h10v12l-5 4-5-4z" fill="#e3ebfa" stroke="#9a9ca6"/></svg>
      <svg class="arr" style="left:1134px;top:4px" width="15" height="15" viewBox="0 0 15 15"><circle cx="7.500" cy="7.500" r="6.500" fill="#e7e8ec" stroke="#8c8d94"/><path d="M4 7.500h7M7.500 4v7" stroke="#75767e" stroke-width="2"/></svg>
    </div>
  </div>
</div>
<div class="dots"></div>
</div>
<script src="https://cdn.jsdelivr.net/npm/bootstrap@5.3.0/dist/js/bootstrap.bundle.min.js"></script>
</body>
</html>
